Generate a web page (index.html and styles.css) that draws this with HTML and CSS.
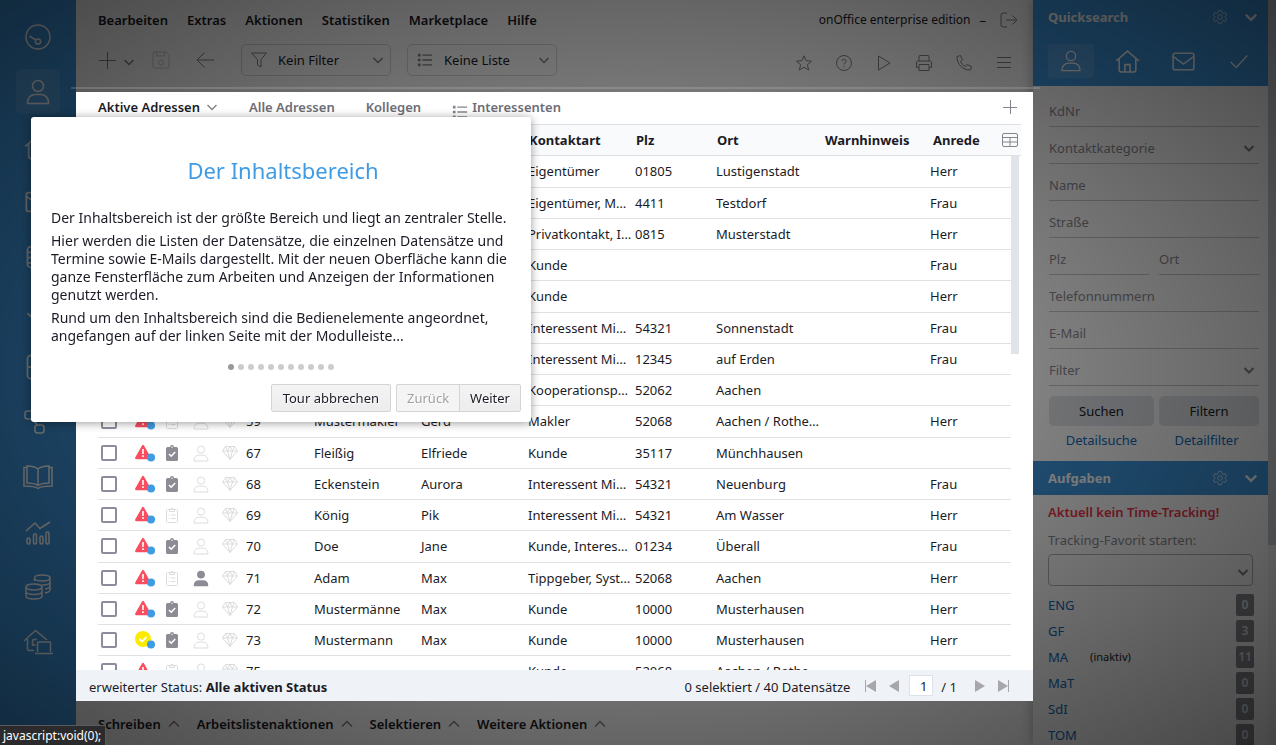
FILE: index.html
```html
<!DOCTYPE html>
<html lang="de">
<head>
<meta charset="utf-8">
<title>onOffice enterprise edition</title>
<link rel="stylesheet" href="styles.css">
</head>
<body>
<svg class="sprite" aria-hidden="true">
  <symbol id="i-user" viewBox="0 0 24 26"><circle cx="12" cy="7" r="5.5"/><path d="M1.5 24.5v-1.5a7.5 7.5 0 0 1 7.5-7.5h6a7.5 7.5 0 0 1 7.5 7.5v1.5z"/></symbol>
  <symbol id="i-user-full" viewBox="0 0 24 26"><circle cx="12" cy="7" r="6"/><path d="M1 25v-2a7.500 7.500 0 0 1 7.500-7.500h7a7.500 7.500 0 0 1 7.500 7.500v2z"/></symbol>
  <symbol id="i-home" viewBox="0 0 24 24"><path d="M1 11.500 12 2l11 9.500M4 9.500V20a2 2 0 0 0 2 2h12a2 2 0 0 0 2-2V9.500M9.500 22v-7h5v7"/></symbol>
  <symbol id="i-mail" viewBox="0 0 24 24"><rect x="2" y="4" width="20" height="16" rx="2"/><path d="m2 7 10 7.500L22 7"/></symbol>
  <symbol id="i-check" viewBox="0 0 24 24"><path d="m3 13 6 6L21 6"/></symbol>
  <symbol id="i-down" viewBox="0 0 12 12"><path d="m1.500 4 4.500 4.500L10.500 4"/></symbol>
  <symbol id="i-up" viewBox="0 0 12 12"><path d="m1 8.500 5-5 5 5"/></symbol>
  <symbol id="i-list" viewBox="0 0 18 16"><path d="M6 2.500h11M6 8h11M6 13.500h11"/><path class="dots" d="M1 1h3v3H1zM1 6.500h3v3H1zM1 12h3v3H1z"/></symbol>
  <symbol id="i-gear" viewBox="0 0 24 24"><circle cx="12" cy="12" r="3.500"/><path d="M10 2h4l.8 3.200 2 1.200 3.200-.9 2 3.500-2.400 2.200v1.600L22 15l-2 3.500-3.200-.9-2 1.200L14 22h-4l-.8-3.200-2-1.200-3.200.9L2 15l2.400-2.200v-1.600L2 9l2-3.500 3.200.9 2-1.200z"/></symbol>
  <symbol id="i-warn" viewBox="0 0 21 18"><path fill="#fa4d5f" d="M7 1.500a1.200 1.200 0 0 1 2 0l6.800 11.900a1.200 1.200 0 0 1-1 1.800H1.200a1.200 1.200 0 0 1-1-1.800z"/><path d="M8 5v5M8 11.300v1.800" stroke="#fff" stroke-width="1.600"/><circle cx="16" cy="13.500" r="4" fill="#3f9be4"/></symbol>
  <symbol id="i-ok" viewBox="0 0 21 18"><circle cx="8" cy="8" r="8" fill="#faeb00"/><path d="m4.500 8 2.500 2.500 4.500-4.500" fill="none" stroke="#fff" stroke-width="1.800"/><circle cx="16" cy="13.500" r="4" fill="#3f9be4"/></symbol>
  <symbol id="i-clip-full" viewBox="0 0 12 16"><path fill="#8c8c94" d="M1.500 2H4a2 2 0 0 1 4 0h2.500A1.500 1.500 0 0 1 12 3.500v11a1.500 1.500 0 0 1-1.500 1.500h-9A1.500 1.500 0 0 1 0 14.500v-11A1.500 1.500 0 0 1 1.500 2z"/><path d="m3 9 2.200 2.200L9.200 7" fill="none" stroke="#fff" stroke-width="1.600"/><circle cx="6" cy="2.200" r=".7" fill="#fff"/></symbol>
  <symbol id="i-clip" viewBox="0 0 12 16"><path d="M1.500 2.500h9a1 1 0 0 1 1 1v11a1 1 0 0 1-1 1h-9a1 1 0 0 1-1-1v-11a1 1 0 0 1 1-1zM3.500 4.500h5v-2h-1.200a1.300 1.300 0 0 0-2.600 0H3.500zM2.500 8h1M5 8h4.500M2.500 11.500h1M5 11.500h4.500"/></symbol>
  <symbol id="i-gem" viewBox="0 0 16 14"><path d="M3.500.5h9l3 4.500L8 13.500.5 5zM.5 5h15M3.500.5 5.500 5 8 .5l2.500 4.500 2-4.500M5.500 5 8 13.500 10.500 5"/></symbol>
</svg>

<nav class="modules" aria-label="Module">
  <button class="module" aria-label="Dashboard"><svg class="icon mid" viewBox="0 0 26 26"><circle cx="13" cy="13" r="12"/><circle cx="13" cy="17.500" r="2.600"/><path d="m4.500 12 6.200 4"/></svg></button>
  <button class="module active" aria-label="Adressen"><svg class="icon"><use href="#i-user"/></svg></button>
  <button class="module" aria-label="Immobilien"><svg class="icon big"><use href="#i-home"/></svg></button>
  <button class="module" aria-label="E-Mail"><svg class="icon big"><use href="#i-mail"/></svg></button>
  <button class="module" aria-label="Kalender"><svg class="icon big" viewBox="0 0 24 24"><rect x="3" y="3" width="18" height="18" rx="3"/><path d="M3 8h18M3 12.500h18M3 17h18M9 8v13M15 8v13"/></svg></button>
  <button class="module" aria-label="Aufgaben"><svg class="icon big"><use href="#i-check"/></svg></button>
  <button class="module" aria-label="Dateien"><svg class="icon big" viewBox="0 0 24 24"><rect x="3" y="2" width="18" height="20" rx="3"/><path d="M3 12h18"/></svg></button>
  <button class="module" aria-label="Prozesse"><svg class="icon big" viewBox="0 0 28 28"><rect x="1" y="3" width="9" height="8" rx="2.500"/><rect x="11" y="17" width="9" height="8" rx="2.500"/><rect x="18" y="3" width="8" height="8" rx="2.500"/><path d="m9 11 4 6M10 7h8"/></svg></button>
  <button class="module" aria-label="Akquise"><svg class="icon wide" viewBox="0 0 30 26"><path d="M15 5C12 2.500 8 2 4 2v17c4 0 8 .5 11 2.500 3-2 7-2.500 11-2.500V2c-4 0-8 .5-11 3zM15 5v16.500M4 3.500H1V22c5 0 11 0 14 2.500C18 22 24 22 29 22V3.500h-3"/></svg></button>
  <button class="module" aria-label="Statistik"><svg class="icon mid" viewBox="0 0 26 26"><path d="m1 12 9-8 5 5.500L25 3"/><rect x="2" y="19" width="3" height="6" rx="1.500"/><rect x="8.500" y="15" width="3" height="10" rx="1.500"/><rect x="15" y="17" width="3" height="8" rx="1.500"/><rect x="21" y="13" width="3" height="12" rx="1.500"/></svg></button>
  <button class="module" aria-label="Finanzen"><svg class="icon mid" viewBox="0 0 26 26"><ellipse cx="9" cy="13" rx="8" ry="3"/><path d="M1 13v9c0 1.700 3.500 3 8 3s8-1.300 8-3v-9M1 17.500c0 1.700 3.500 3 8 3s8-1.300 8-3M9.500 7V4c0-1.700 3.500-3 8-3s7.500 1.300 7.500 3v12c0 1.500-2 2.500-5 3M9.500 4c0 1.700 3.500 3 8 3S25 5.700 25 4M17 11c4.500 0 8-1.300 8-3M20 15c3-.5 5-1.500 5-3"/></svg></button>
  <button class="module" aria-label="Portale"><svg class="icon wide" viewBox="0 0 30 26"><path d="M1 12 12.500 1.500 24 11M4.500 10v10a1.500 1.500 0 0 0 1.500 1.500h5M14 10.500h-3a1.500 1.500 0 0 0-1.500 1.500v4h3M14.500 23V14a1 1 0 0 1 1-1h11a1 1 0 0 1 1 1v9M12 24.500h18"/></svg></button>
</nav>

<div class="center">
  <header class="top">
    <div class="menu-row">
      <nav class="menu">
        <a href="#">Bearbeiten</a><a href="#">Extras</a><a href="#">Aktionen</a><a href="#">Statistiken</a><a href="#">Marketplace</a><a href="#">Hilfe</a>
      </nav>
      <span class="edition">onOffice enterprise edition</span><span class="dash">–</span>
      <button class="plain" aria-label="Abmelden"><svg class="line s18" viewBox="0 0 18 16"><path d="M7 1H3a2 2 0 0 0-2 2v10a2 2 0 0 0 2 2h4M6 8h11M12.500 3.500 17 8l-4.500 4.500"/></svg></button>
    </div>
    <div class="tools">
      <button class="plain split" aria-label="Neu"><svg class="line s18" viewBox="0 0 18 18"><path d="M9.500 1v17M1 9.500h17"/></svg><svg class="line bold s12"><use href="#i-down"/></svg></button>
      <button class="plain faint save" aria-label="Speichern"><svg class="line s18" viewBox="0 0 18 18"><path d="M1 3a2 2 0 0 1 2-2h11l3 3v11a2 2 0 0 1-2 2H3a2 2 0 0 1-2-2zM4.500 1v4h8V1"/><circle cx="9" cy="11.500" r="2.500"/></svg></button>
      <button class="plain back" aria-label="Zurück"><svg class="line s18" viewBox="0 0 18 18"><path d="M18 9H1M8.500 1.500 1 9l7.500 7.500"/></svg></button>
      <button class="drop"><svg class="line s16" viewBox="0 0 16 16"><path d="M.5 1h15L10 7.500V15l-3.500-2V7.500z"/></svg><span>Kein Filter</span><svg class="line bold s12"><use href="#i-down"/></svg></button>
      <button class="drop"><svg class="line s16 bold"><use href="#i-list"/></svg><span>Keine Liste</span><svg class="line bold s12"><use href="#i-down"/></svg></button>
      <div class="quick">
        <button class="plain" aria-label="Favoriten"><svg class="line s16" viewBox="0 0 16 16"><path d="m8 .8 2.100 4.900 5.400.5-4.100 3.500 1.300 5.300L8 12.200 3.300 15l1.300-5.300L.5 6.200l5.400-.5z"/></svg></button>
        <button class="plain" aria-label="Hilfe"><svg class="line s16" viewBox="0 0 16 16"><circle cx="8" cy="8" r="7.500"/><path d="M6 6.200a2 2 0 1 1 3 1.700c-.7.400-1 .8-1 1.600M8 11v1.200"/></svg></button>
        <button class="plain" aria-label="Start"><svg class="line s16" viewBox="0 0 16 16"><path d="M2.500 1v14l11.500-7z"/></svg></button>
        <button class="plain" aria-label="Drucken"><svg class="line s16" viewBox="0 0 16 16"><path d="M3 6V1.500a1 1 0 0 1 1-1h8a1 1 0 0 1 1 1V6M3 12.500H.5V8a2 2 0 0 1 2-2h11a2 2 0 0 1 2 2v4.500H13M3 9.500h10v6H3z"/></svg></button>
        <button class="plain" aria-label="Telefon"><svg class="line s16" viewBox="0 0 16 16"><path d="m1 1.500 3.500-1 2 4.500-2 1.500c1 2.300 2.700 4 5 5l1.500-2 4.500 2-1 3.500C7 15.500.5 9 1 1.500z"/></svg></button>
        <button class="plain" aria-label="Menü"><svg class="line s16" viewBox="0 0 16 16"><path d="M1 2.500h14M1 7.500h14M1 12.500h14"/></svg></button>
      </div>
    </div>
  </header>

  <main class="content">
    <div class="tabs">
      <button class="tab current">Aktive Adressen<svg class="line bold s12"><use href="#i-down"/></svg></button>
      <button class="tab">Alle Adressen</button>
      <button class="tab">Kollegen</button>
      <button class="tab listed"><svg class="line s16 bold"><use href="#i-list"/></svg>Interessenten</button>
      <button class="plain add" aria-label="Reiter hinzufügen"><svg class="line s14" viewBox="0 0 14 14"><path d="M7.500 0v14M0 7.500h14"/></svg></button>
    </div>
    <div class="grid-wrap">
      <table class="grid">
        <colgroup><col class="c-check"><col class="c-icon"><col class="c-icon"><col class="c-icon"><col class="c-gem"><col class="c-nr"><col class="c-text"><col class="c-text"><col class="c-text"><col class="c-plz"><col class="c-city"><col class="c-warn"><col></colgroup>
        <thead><tr><th></th><th></th><th></th><th></th><th></th><th></th><th></th><th></th><th>Kontaktart</th><th>Plz</th><th>Ort</th><th>Warnhinweis</th><th>Anrede</th></tr></thead>
        <tbody id="rows"></tbody>
      </table>
      <div class="side">
        <button class="plain columns" aria-label="Spalten"><svg class="line s16" viewBox="0 0 16 14"><rect x=".5" y=".5" width="15" height="13" rx="1.500"/><path d="M0 4.500h16M0 9h16M8 4.500V14"/></svg></button>
        <div class="thumb"></div>
      </div>
    </div>
    <div class="status">
      <span>erweiterter Status: <b>Alle aktiven Status</b></span>
      <span class="count">0 selektiert / 40 Datensätze</span>
      <button class="plain" aria-label="Erste Seite"><svg class="solid" viewBox="0 0 11 12"><path d="M0 0h1v12H0zM11 0v12L1 6z"/></svg></button>
      <button class="plain" aria-label="Vorige Seite"><svg class="solid" viewBox="0 0 11 12"><path d="M11 0v12L1 6z"/></svg></button>
      <input class="page" type="text" value="1" aria-label="Seite"><span class="pages">/ 1</span>
      <button class="plain" aria-label="Nächste Seite"><svg class="solid" viewBox="0 0 11 12"><path d="M0 0v12l10-6z"/></svg></button>
      <button class="plain" aria-label="Letzte Seite"><svg class="solid" viewBox="0 0 11 12"><path d="M10 0h1v12h-1zM0 0v12l10-6z"/></svg></button>
    </div>
  </main>

  <footer class="actions">
    <button class="action">Schreiben<svg class="line bold s12"><use href="#i-up"/></svg></button>
    <button class="action">Arbeitslistenaktionen<svg class="line bold s12"><use href="#i-up"/></svg></button>
    <button class="action">Selektieren<svg class="line bold s12"><use href="#i-up"/></svg></button>
    <button class="action">Weitere Aktionen<svg class="line bold s12"><use href="#i-up"/></svg></button>
  </footer>
</div>

<aside class="right">
  <div class="panel">
    <section class="search-head">
      <div class="bar"><h2>Quicksearch</h2><button class="plain" aria-label="Einstellungen"><svg class="line s16"><use href="#i-gear"/></svg></button><button class="plain" aria-label="Einklappen"><svg class="line heavy s14"><use href="#i-down"/></svg></button></div>
      <div class="kinds">
        <button class="kind on" aria-label="Adressen"><svg class="icon"><use href="#i-user"/></svg></button>
        <button class="kind" aria-label="Immobilien"><svg class="icon big"><use href="#i-home"/></svg></button>
        <button class="kind" aria-label="E-Mail"><svg class="icon big"><use href="#i-mail"/></svg></button>
        <button class="kind" aria-label="Aufgaben"><svg class="icon"><use href="#i-check"/></svg></button>
      </div>
    </section>
    <form class="search">
      <input type="text" placeholder="KdNr" aria-label="KdNr">
      <div class="pick"><select aria-label="Kontaktkategorie"><option>Kontaktkategorie</option></select><svg class="line heavy s12"><use href="#i-down"/></svg></div>
      <input type="text" placeholder="Name" aria-label="Name">
      <input type="text" placeholder="Straße" aria-label="Straße">
      <div class="pair"><input type="text" placeholder="Plz" aria-label="Plz"><input type="text" placeholder="Ort" aria-label="Ort"></div>
      <input type="text" placeholder="Telefonnummern" aria-label="Telefonnummern">
      <input type="text" placeholder="E-Mail" aria-label="E-Mail">
      <div class="pick"><select aria-label="Filter"><option>Filter</option></select><svg class="line heavy s12"><use href="#i-down"/></svg></div>
      <div class="buttons"><button type="button">Suchen</button><button type="button">Filtern</button></div>
      <div class="links"><a href="#">Detailsuche</a><a href="#">Detailfilter</a></div>
    </form>
    <section class="bar tasks-head"><h2>Aufgaben</h2><button class="plain" aria-label="Einstellungen"><svg class="line s16"><use href="#i-gear"/></svg></button><button class="plain" aria-label="Einklappen"><svg class="line heavy s14"><use href="#i-down"/></svg></button></section>
    <section class="tasks">
      <p class="alert">Aktuell kein Time-Tracking!</p>
      <label for="favorite">Tracking-Favorit starten:</label>
      <div class="pick boxed"><select id="favorite"><option></option></select><svg class="line heavy s12"><use href="#i-down"/></svg></div>
      <ul class="groups">
        <li><a href="#">ENG</a><span class="badge">0</span></li>
        <li><a href="#">GF</a><span class="badge">3</span></li>
        <li><a href="#">MA</a><small>(inaktiv)</small><span class="badge">11</span></li>
        <li><a href="#">MaT</a><span class="badge">0</span></li>
        <li><a href="#">SdI</a><span class="badge">0</span></li>
        <li><a href="#">TOM</a><span class="badge">0</span></li>
      </ul>
    </section>
  </div>
  <div class="track"><div class="track-thumb"></div></div>
</aside>

<div class="overlay"></div>
<div class="edge"></div>

<div class="tour" role="dialog" aria-labelledby="tour-title">
  <h1 id="tour-title">Der Inhaltsbereich</h1>
  <p>Der Inhaltsbereich ist der größte Bereich und liegt an zentraler Stelle.</p>
  <p>Hier werden die Listen der Datensätze, die einzelnen Datensätze und Termine sowie E-Mails dargestellt. Mit der neuen Oberfläche kann die ganze Fensterfläche zum Arbeiten und Anzeigen der Informationen genutzt werden.</p>
  <p>Rund um den Inhaltsbereich sind die Bedienelemente angeordnet, angefangen auf der linken Seite mit der Modulleiste...</p>
  <div class="bullets"><i class="now"></i><i></i><i></i><i></i><i></i><i></i><i></i><i></i><i></i><i></i><i></i></div>
  <div class="tour-buttons"><button class="quit">Tour abbrechen</button><button class="prev" disabled>Zurück</button><button class="next">Weiter</button></div>
</div>
<div class="link-hint">javascript:void(0);</div>
<script src="rows.js"></script>
</body>
</html>
```
FILE: rows.js
```js
// warn/ok, task clipboard filled, person filled, Nr, Name, Vorname, Kontaktart, Plz, Ort, Anrede
const data = [
  ['warn', 1, 0, '', '', '', 'Eigentümer', '01805', 'Lustigenstadt', 'Herr'],
  ['warn', 1, 0, '', '', '', 'Eigentümer, M…', '4411', 'Testdorf', 'Frau'],
  ['warn', 1, 0, '', '', '', 'Privatkontakt, I…', '0815', 'Musterstadt', 'Herr'],
  ['warn', 1, 0, '', '', '', 'Kunde', '', '', 'Frau'],
  ['warn', 1, 0, '', '', '', 'Kunde', '', '', 'Herr'],
  ['warn', 1, 0, '', '', '', 'Interessent Mi…', '54321', 'Sonnenstadt', 'Frau'],
  ['warn', 1, 0, '', '', '', 'Interessent Mi…', '12345', 'auf Erden', 'Frau'],
  ['warn', 1, 0, '', '', '', 'Kooperationsp…', '52062', 'Aachen', ''],
  ['warn', 0, 0, '59', 'Mustermakler', 'Gerd', 'Makler', '52068', 'Aachen / Rothe…', 'Herr'],
  ['warn', 1, 0, '67', 'Fleißig', 'Elfriede', 'Kunde', '35117', 'Münchhausen', ''],
  ['warn', 1, 0, '68', 'Eckenstein', 'Aurora', 'Interessent Mi…', '54321', 'Neuenburg', 'Frau'],
  ['warn', 0, 0, '69', 'König', 'Pik', 'Interessent Mi…', '54321', 'Am Wasser', 'Herr'],
  ['warn', 1, 0, '70', 'Doe', 'Jane', 'Kunde, Interes…', '01234', 'Überall', 'Frau'],
  ['warn', 0, 1, '71', 'Adam', 'Max', 'Tippgeber, Syst…', '52068', 'Aachen', 'Herr'],
  ['warn', 1, 0, '72', 'Mustermänne', 'Max', 'Kunde', '10000', 'Musterhausen', 'Herr'],
  ['ok', 1, 0, '73', 'Mustermann', 'Max', 'Kunde', '10000', 'Musterhausen', 'Herr'],
  ['warn', 0, 0, '75', '', '', 'Kunde', '52068', 'Aachen / Rothe…', '']
];
const icon = (name, cls) => `<td><svg class="mark ${cls}"><use href="#i-${name}"/></svg></td>`;
document.getElementById('rows').innerHTML = data.map(([state, clip, person, ...t]) =>
  `<tr><td><input type="checkbox" aria-label="Datensatz ${t[0]}"></td>` +
  icon(state, 'state') +
  icon(clip ? 'clip-full' : 'clip', clip ? 'clip' : 'clip pale') +
  icon(person ? 'user-full' : 'user', person ? 'person full' : 'person pale') +
  icon('gem', 'gem pale') +
  [t[0], t[1], t[2], t[3], t[4], t[5], '', t[6]].map(v => `<td>${v}</td>`).join('') + '</tr>').join('');
```
FILE: styles.css
```css
* { box-sizing: border-box; }
body {
  margin: 0; height: 100vh; overflow: hidden; display: flex; position: relative;
  font: 13px/18px "Noto Sans", "Open Sans", sans-serif; color: #1b1b26; background: #fff;
}
button, input, select { font: inherit; color: inherit; margin: 0; }
button { border: 0; padding: 0; background: none; cursor: pointer; }
a { text-decoration: none; color: inherit; }
h1, h2, p, ul { margin: 0; padding: 0; }
.sprite { position: absolute; width: 0; height: 0; }
svg { display: block; flex: none; }

.line { fill: none; stroke: #84848c; stroke-width: 1; }
.line.bold { stroke-width: 1.5; }
.line.heavy { stroke-width: 2; }
.dots { fill: #84848c; stroke: none; }
.s12 { width: 12px; height: 12px; }
.s14 { width: 14px; height: 14px; }
.s16 { width: 16px; height: 16px; }
.s18 { width: 18px; height: 18px; }
.icon { width: 24px; height: 26px; fill: none; stroke: #fff; stroke-width: 1.5; overflow: visible; }
.icon.mid { width: 26px; }
.icon.big { width: 28px; height: 28px; }
.icon.wide { width: 30px; }
.plain { display: flex; align-items: center; }

/* module bar */
.modules { flex: none; width: 76px; padding: 14px 16px; display: flex; flex-direction: column; gap: 10px; background: #3f98e0; overflow: hidden; }
.module { flex: none; height: 45px; border-radius: 6px; display: grid; place-items: center; }
.module.active { background: rgba(255, 255, 255, .12); }

/* header */
.center { flex: 1; min-width: 0; display: flex; flex-direction: column; }
.top { flex: none; height: 92px; padding-left: 22px; }
.menu-row { height: 40px; padding-right: 15px; display: flex; align-items: center; }
.menu { flex: 1; display: flex; gap: 19px; font-weight: 600; }
.edition { font-size: 12px; }
.dash { margin: 0 14px 0 9px; }
.tools { height: 40px; padding-right: 21px; display: flex; align-items: center; }
.split { gap: 7px; }
.split .s12 { margin-top: 4px; }
.save { margin-left: 17px; }
.faint { opacity: .4; }
.back { margin: 0 27px 0 26px; }
.drop { width: 150px; height: 32px; margin-right: 16px; padding: 0 6px 0 9px; border: 1px solid #d8d8de; border-radius: 5px; display: flex; align-items: center; gap: 11px; }
.drop span { flex: 1; text-align: left; }
.quick { margin: 5px 0 0 auto; display: flex; gap: 24px; }

/* highlighted content area */
.content { flex: 1; min-height: 0; position: relative; z-index: 2; background: #fff; display: flex; flex-direction: column; }
.tabs { flex: none; height: 32px; padding: 0 16px 2px 22px; display: flex; align-items: center; font-weight: 600; color: #6d6d74; }
.tab { font-weight: 600; display: flex; align-items: center; gap: 6px; margin-right: 31px; }
.tab.current { color: #1b1b26; }
.tab.listed { gap: 4px; }
.tab.listed svg { margin-top: 9px; }
.add { margin-left: auto; }
.grid-wrap { flex: 1; min-height: 0; overflow: hidden; display: flex; padding: 0 12px 0 22px; }
.grid { flex: 1; min-width: 0; table-layout: fixed; border-collapse: separate; border-spacing: 0; height: 0; }
.c-check { width: 37px; } .c-icon { width: 29px; } .c-gem { width: 24px; } .c-nr { width: 68px; }
.c-text { width: 107px; } .c-plz { width: 81px; } .c-city { width: 108px; } .c-warn { width: 106px; }
th { height: 32px; padding: 0 0 0 1px; text-align: left; font-weight: 700; background: #f9fafb; border-top: 1px solid #dfe1e7; border-bottom: 1px solid #dfe1e7; }
th:last-child { padding-left: 3px; }
td { height: 31px; padding: 0; white-space: nowrap; border-bottom: 1px solid #dfe1e7; }
tr:nth-child(4n+1) td { height: 32px; padding-bottom: 1px; }
td input { appearance: none; display: block; width: 16px; height: 16px; margin-left: 3px; border: 2px solid #8c8c9c; border-radius: 2px; background: #fff; }
.mark { fill: none; }
.mark.state { width: 21px; height: 18px; }
.mark.clip { width: 12px; height: 16px; margin-left: 2px; }
.mark.person { width: 16px; height: 17px; }
.mark.gem { width: 16px; height: 14px; }
.pale { stroke: #dcdcde; stroke-width: 1; }
.person.pale { stroke-width: 1.5; }
.person.full { fill: #8c8c94; }
.side { flex: none; width: 10px; }
.columns { width: 10px; height: 32px; background: #f9fafb; border-top: 1px solid #dfe1e7; border-bottom: 1px solid #dfe1e7; justify-content: flex-end; }
.columns svg { margin-right: 3px; }
.thumb { width: 8px; height: 198px; background: #e0e4e9; }
.status { flex: none; height: 31px; padding: 2px 24px 0 13px; background: #eff3f7; display: flex; align-items: center; gap: 12px; }
.status svg, .page { margin-bottom: 2px; }
.count { margin: 0 3px 0 auto; }
.solid { width: 11px; height: 12px; fill: #a6a6ab; }
.page { width: 24px; height: 21px; margin-left: -2px; padding: 0 5px; text-align: right; border: 1px solid #dfe1e7; background: #fff; }
.pages { margin: 0 6px 0 -4px; }

.actions { flex: none; height: 44px; padding: 2px 0 0 22px; display: flex; align-items: center; gap: 17px; }
.action { font-weight: 600; display: flex; align-items: center; gap: 7px; }

/* right column */
.right { flex: none; width: 243px; display: flex; position: relative; box-shadow: 0 0 12px rgba(0, 0, 0, .3); background: #fff; overflow: hidden; }
.panel { flex: 1; min-width: 0; }
.track { flex: none; width: 8px; background: #f4f4f6; }
.track-thumb { height: 545px; background: #c8cbd0; }
.bar { height: 34px; padding: 0 10px 0 15px; display: flex; align-items: center; gap: 16px; color: #fff; background: #3f98e0; }
.bar h2 { flex: 1; font-size: 13px; font-weight: 700; }
.bar .line { stroke: #fff; }
.search-head { height: 86px; background: #3f98e0; }
.kinds { display: flex; padding: 10px 5px 0 15px; gap: 10px; }
.kind { width: 46px; height: 34px; border-radius: 4px; display: grid; place-items: center; }
.kind.on { background: rgba(255, 255, 255, .12); }
.kind .icon { width: 22px; height: 22px; }
.kind .icon.big { width: 25px; height: 25px; }
.search { padding: 4px 9px 0 16px; height: 375px; }
.search input, .search select, .tasks select { display: block; width: 100%; min-width: 0; appearance: none; background: none; outline: 0; }
.search input, .search select { height: 37px; padding: 6px 0 0; border: 0; border-bottom: 1px solid #c9c9cd; border-radius: 0; color: #8c8c94; }
.search input::placeholder { color: #8c8c94; opacity: 1; }
.pick { display: grid; align-items: center; }
.pick > * { grid-area: 1 / 1; }
.pick svg { justify-self: end; margin: 4px 4px 0 0; pointer-events: none; }
.pair { display: grid; grid-template-columns: 1fr 1fr; gap: 10px; }
.buttons { display: grid; grid-template-columns: 105px 1fr; gap: 5px; margin-top: 10px; }
.buttons button { height: 30px; border-radius: 5px; background: #e0e4e9; }
.links { display: grid; grid-template-columns: 105px 95px; gap: 5px; margin-top: 5px; text-align: center; }
.links a, .groups a { color: #0f6cbd; }
.tasks { padding: 8px 14px 0 15px; }
.alert { font-weight: 600; color: #f0364b; margin-bottom: 10px; }
.tasks label { display: block; color: #8c8c94; margin-bottom: 5px; }
.boxed { padding-right: 1px; }
.boxed select { height: 32px; border: 1px solid #b4b4ba; border-radius: 4px; }
.groups { list-style: none; margin-top: 6px; }
.groups li { height: 26px; display: flex; align-items: center; }
.groups small { font-size: 11px; margin-left: 22px; }
.badge { margin-left: auto; width: 18px; height: 22px; border-radius: 2px; background: #8c8c94; color: #e6e6ea; font-size: 12px; line-height: 22px; font-weight: 600; text-align: center; }

/* guided tour */
.overlay { position: fixed; inset: 0; z-index: 1; opacity: .8; background: radial-gradient(ellipse farthest-corner at center, rgba(0, 0, 0, .4) 0, rgba(0, 0, 0, .9) 100%); }
.edge { position: absolute; z-index: 2; left: 71px; right: 236px; top: 87px; height: 2px; background: rgba(255, 255, 255, .15); }
.tour { position: absolute; z-index: 3; left: 31px; top: 117px; width: 500px; padding: 39px 10px 10px 20px; background: #fff; border-radius: 3px; box-shadow: 0 1px 10px rgba(0, 0, 0, .4); font-size: 14px; }
.tour h1 { font-size: 22px; line-height: 28px; font-weight: 400; color: #3f9be4; text-align: center; margin: 0 10px 25px 4px; }
.tour p { margin-bottom: 5px; padding-right: 5px; }
.bullets { display: flex; justify-content: center; gap: 4px; margin: 19px 10px 14px 0; }
.bullets i { width: 6px; height: 6px; border-radius: 3px; background: #ccc; }
.bullets .now { background: #999; }
.tour-buttons { display: flex; justify-content: flex-end; }
.tour-buttons button { height: 28px; padding: 0 10px; font-size: 13px; border: 1px solid #d4d4d4; border-radius: 2px; background: linear-gradient(#f4f4f4, #ececec); text-shadow: 1px 1px 0 #fff; }
.tour-buttons .quit { margin-right: 5px; padding: 0 11px; }
.tour-buttons .prev { color: #a0a0a0; background: #f4f4f4; border-radius: 2px 0 0 2px; }
.tour-buttons .next { margin-left: -1px; border-radius: 0 2px 2px 0; }
.link-hint { position: fixed; z-index: 4; left: 0; bottom: 0; padding: 2px 4px 0 3px; height: 20px; font-size: 12px; line-height: 16px; color: #fff; background: #2b2b2e; border: 1px solid #5a5a5e; border-width: 1px 1px 0 0; }
```
